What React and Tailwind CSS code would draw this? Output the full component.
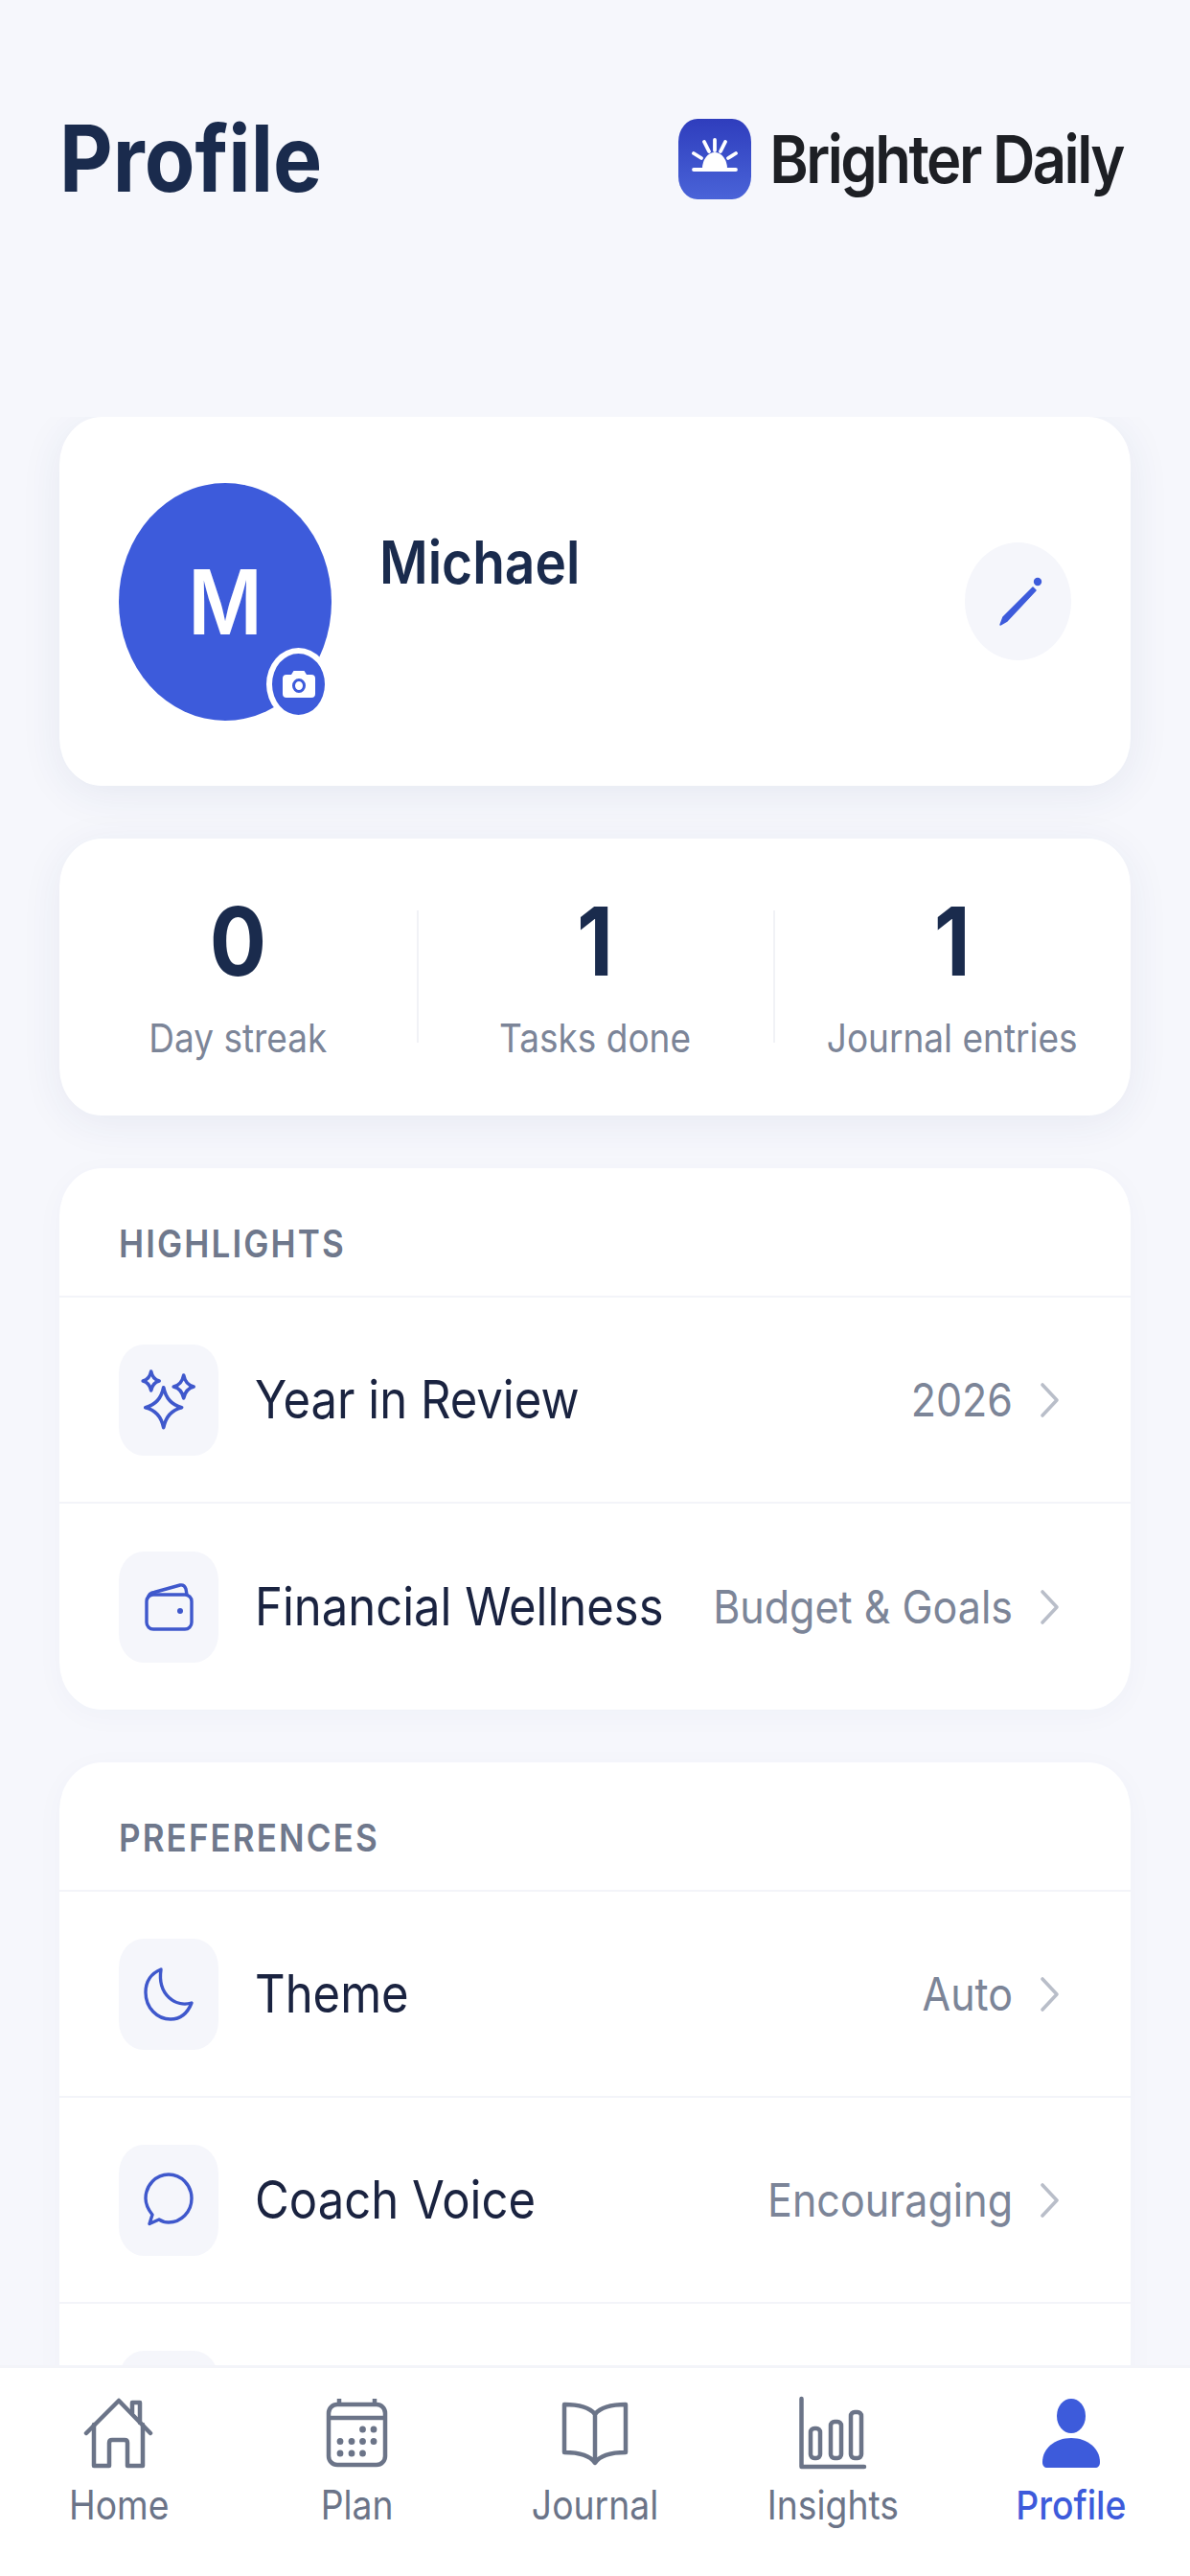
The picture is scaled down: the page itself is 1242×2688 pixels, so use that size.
import React from "react";

const inter = "font-['Inter','Noto_Sans',sans-serif]";

const ROW_STROKE = "#3f58cc";
const NAV_GRAY = "#6b7488";
const BLUE = "#3d5bdb";

const SparklesIcon = () => {
  const star = (cx, cy, w, h) =>
    `M${cx} ${cy - h} Q${cx + w * 0.18} ${cy - h * 0.18} ${cx + w} ${cy} Q${cx + w * 0.18} ${cy + h * 0.18} ${cx} ${cy + h} Q${cx - w * 0.18} ${cy + h * 0.18} ${cx - w} ${cy} Q${cx - w * 0.18} ${cy - h * 0.18} ${cx} ${cy - h}Z`;
  return (
    <svg width="70" height="70" viewBox="0 0 70 70" fill="none" stroke={ROW_STROKE} strokeWidth="3.6" strokeLinejoin="round">
      <path d={star(29.7, 42.7, 19, 21)} />
      <path d={star(16.7, 15, 8.5, 10)} />
      <path d={star(50.7, 21, 10.5, 12)} />
    </svg>
  );
};

const WalletIcon = () => (
  <svg width="60" height="60" viewBox="0 0 60 60" fill="none" stroke={ROW_STROKE} strokeWidth="3.4" strokeLinejoin="round">
    <rect x="7" y="17" width="47" height="36" rx="7" />
    <path d="M8 21C9 17 11 15 15 14.5L42 7C45 6.5 47 8 48 11L49 17" />
    <circle cx="42" cy="34" r="3" fill={ROW_STROKE} stroke="none" />
  </svg>
);

const MoonIcon = () => (
  <svg width="60" height="66" viewBox="0 0 60 66" fill="none" stroke={ROW_STROKE} strokeWidth="3.4" strokeLinejoin="round">
    <path d="M22 7C10 12 6 22 6 31C6 47 18 59 32 59C43 59 50 52 54 42C38 47 18 34 22 7Z" />
  </svg>
);

const ChatIcon = () => (
  <svg width="60" height="64" viewBox="0 0 60 64" fill="none" stroke={ROW_STROKE} strokeWidth="3.4" strokeLinejoin="round">
    <path d="M30 5C43 5 54 16 54 30C54 44 43 55 30 55C26 55 23 54 20 52L10 56.5L13 47C9 42 6 36 6 30C6 16 17 5 30 5Z" />
  </svg>
);

const HomeIcon = () => (
  <svg width="76" height="78" viewBox="0 0 76 78" fill="none" stroke={NAV_GRAY} strokeWidth="4.5" strokeLinecap="round" strokeLinejoin="round">
    <path d="M4 39L38 5L71 39" />
    <path d="M12 30V73H28V49Q28 46 31 46H44Q47 46 47 49V73H63V30" />
    <path d="M52 18V7H60V28" />
  </svg>
);

const CalendarIcon = () => (
  <svg width="72" height="78" viewBox="0 0 72 78" fill="none" stroke={NAV_GRAY} strokeWidth="4.5">
    <rect x="6" y="9" width="59" height="63" rx="9" />
    <path d="M6 23H65" />
    <path d="M17 3V9M54 3V9" />
    <g fill={NAV_GRAY} stroke="none">
      {[[41.5, 35], [53, 35], [18, 47.5], [30, 47.5], [41.5, 47.5], [53, 47.5], [18, 60], [30, 60], [41.5, 60]].map(([x, y]) => (
        <ellipse key={`${x}-${y}`} cx={x} cy={y} rx="3.4" ry="3.6" />
      ))}
    </g>
  </svg>
);

const BookIcon = () => (
  <svg width="76" height="76" viewBox="0 0 76 76" fill="none" stroke={NAV_GRAY} strokeWidth="4.5" strokeLinejoin="round">
    <path d="M38 18C32 11 20 8 6 8V58C20 58 32 60 38 69C44 60 56 58 70 58V8C56 8 44 11 38 18Z" />
    <path d="M38 18V69" />
  </svg>
);

const ChartIcon = () => (
  <svg width="78" height="84" viewBox="0 0 78 84" fill="none" stroke={NAV_GRAY} strokeWidth="4.5" strokeLinecap="round" strokeLinejoin="round">
    <path d="M6.5 6V77H72" />
    <rect x="16" y="37" width="10" height="31" rx="4" />
    <rect x="37" y="30" width="11" height="38" rx="4" />
    <rect x="58" y="20" width="11" height="48" rx="4" />
  </svg>
);

const PersonIcon = () => (
  <svg width="72" height="78" viewBox="0 0 72 78" fill={BLUE}>
    <ellipse cx="36" cy="21" rx="15" ry="18" />
    <path d="M6 69C6 55 19 44 36 44C53 44 66 55 66 69C66 73 64 75 61 75H11C8 75 6 73 6 69Z" />
  </svg>
);

const Row = ({ icon, title, value, last }) => (
  <div className={`flex h-[215px] flex-none items-center pl-[62px] pr-[73px] ${last ? "" : "border-b-2 border-[#f3f4f9]"}`}>
    <div className="flex h-[116px] w-[104px] flex-none items-center justify-center rounded-[26px/30px] bg-[#f5f6fb]">{icon}</div>
    <div className="ml-[38px] flex-1 scale-y-[1.117] text-[49px] leading-none font-normal whitespace-nowrap text-[#1a2340]">{title}</div>
    {value && <div className="scale-y-[1.117] text-[43px] leading-none text-[#7c8598]">{value}</div>}
    <svg className="ml-[28px] flex-none" width="22" height="38" viewBox="0 0 22 38" fill="none" stroke="#b9bec9" strokeWidth="3.6" strokeLinecap="round" strokeLinejoin="round">
      <path d="M3 3L18 19L3 35" />
    </svg>
  </div>
);

const SectionCard = ({ title, children }) => (
  <section className="flex-none rounded-[44px/50px] bg-white shadow-[0_6px_30px_rgba(40,60,120,0.03)]">
    <div className="flex h-[135px] items-center border-b-2 border-[#f3f4f9] pt-[26px] pl-[62px]">
      <div className="scale-y-[1.117] text-[35px] leading-none font-semibold tracking-[2.1px] text-[#6f788c]">{title}</div>
    </div>
    {children}
  </section>
);

const Stat = ({ value, label, divider }) => (
  <div className="relative flex flex-1 flex-col items-center">
    {divider && <div className="absolute top-[75px] left-0 h-[138px] w-[2px] bg-[#f1f2f6]" />}
    <div className="mt-[57px] scale-y-[1.117] text-[88px] leading-[100px] font-bold text-[#1a2b4d]">{value}</div>
    <div className="mt-[26px] scale-y-[1.117] text-[37px] leading-[50px] text-[#7c8598]">{label}</div>
  </div>
);

const NavItem = ({ icon, label, active }) => (
  <div className="flex flex-1 flex-col items-center">
    <div className="flex h-[84px] items-center justify-center">{icon}</div>
    <div className={`mt-[11px] scale-y-[1.117] text-[37.3px] leading-[44px] ${active ? "font-medium text-[#3d5bdb]" : "text-[#6b7488]"}`}>{label}</div>
  </div>
);

export default function App() {
  return (
    <div className={`flex h-[2688px] w-[1242px] flex-col overflow-hidden bg-[#f6f7fc] ${inter}`}>
      <header className="flex h-[435px] flex-none items-start justify-between pt-[124px] pr-[70px] pl-[62px]">
        <h1 className="mt-[-7px] scale-y-[1.117] text-[86px] leading-[96px] font-bold text-[#1a2b4d]">Profile</h1>
        <div className="flex items-center">
          <div className="flex h-[84px] w-[76px] items-center justify-center rounded-[20px/24px] bg-gradient-to-b from-[#2f3dbd] to-[#4a63d8]">
            <svg width="56" height="50" viewBox="0 0 56 50" fill="none" stroke="#ffffff" strokeWidth="3.8" strokeLinecap="round">
              <path d="M15 35A13 17 0 0 1 41 35Z" fill="#ffffff" stroke="none" />
              <path d="M6 36H50" />
              <path d="M28 5V16M17 7L22 17M39 7L34 17M6 19L14 24M50 19L42 24" />
            </svg>
          </div>
          <div className="ml-[19px] scale-y-[1.117] text-[61.5px] leading-none font-semibold tracking-[-2.5px] text-[#1d1f24]">Brighter Daily</div>
        </div>
      </header>

      <main className="flex min-h-0 flex-1 flex-col gap-[55px] overflow-hidden px-[62px]">
        <section className="flex h-[385px] flex-none items-center rounded-[44px/50px] bg-white pr-[62px] pl-[62px] shadow-[0_8px_44px_rgba(40,60,120,0.08)]">
          <div className="relative flex h-[248px] w-[222px] flex-none items-center justify-center rounded-[50%] bg-[#3d5bdb]">
            <span className="block scale-y-[1.117] text-[84px] leading-none font-semibold text-white">M</span>
            <div className="absolute right-[1px] bottom-0 flex h-[76px] w-[67px] items-center justify-center rounded-[50%] border-[6px] border-white bg-[#3d5bdb]">
              <svg width="36" height="30" viewBox="0 0 36 30">
                <path fillRule="evenodd" fill="#ffffff" d="M5 5H10L12.5 1H23.5L26 5H31Q35 5 35 9V25Q35 29 31 29H5Q1 29 1 25V9Q1 5 5 5ZM18 9A7 7.5 0 1 0 18 24A7 7.5 0 1 0 18 9ZM18 12A4 4.5 0 1 1 18 21A4 4.5 0 1 1 18 12Z" />
              </svg>
            </div>
          </div>
          <div className="mt-[-80px] ml-[50px] flex-1 origin-left scale-y-[1.117] text-[55px] leading-none font-semibold text-[#1a2b4d]">Michael</div>
          <div className="flex h-[123px] w-[111px] flex-none items-center justify-center rounded-[50%] bg-[#f5f6fb]">
            <svg width="60" height="66" viewBox="0 0 60 66" fill={BLUE} stroke={BLUE} strokeLinejoin="round">
              <path d="M11 57L14 49L45 18L48 21L18 53Z" strokeWidth="1.5" />
              <circle cx="50" cy="12" r="4.2" stroke="none" />
            </svg>
          </div>
        </section>

        <section className="flex h-[289px] flex-none rounded-[44px/50px] bg-white shadow-[0_8px_44px_rgba(40,60,120,0.07)]">
          <Stat value="0" label="Day streak" />
          <Stat value="1" label="Tasks done" divider />
          <Stat value="1" label="Journal entries" divider />
        </section>

        <SectionCard title="HIGHLIGHTS">
          <Row icon={<SparklesIcon />} title="Year in Review" value="2026" />
          <Row icon={<WalletIcon />} title="Financial Wellness" value="Budget & Goals" last />
        </SectionCard>

        <SectionCard title="PREFERENCES">
          <Row icon={<MoonIcon />} title="Theme" value="Auto" />
          <Row icon={<ChatIcon />} title="Coach Voice" value="Encouraging" />
          <Row icon={null} title="" />
        </SectionCard>
      </main>

      <nav className="flex h-[220px] flex-none border-t-[3px] border-[#f3f4f9] bg-white pt-[26px]">
        <NavItem icon={<HomeIcon />} label="Home" />
        <NavItem icon={<CalendarIcon />} label="Plan" />
        <NavItem icon={<BookIcon />} label="Journal" />
        <NavItem icon={<ChartIcon />} label="Insights" />
        <NavItem icon={<PersonIcon />} label="Profile" active />
      </nav>
    </div>
  );
}
